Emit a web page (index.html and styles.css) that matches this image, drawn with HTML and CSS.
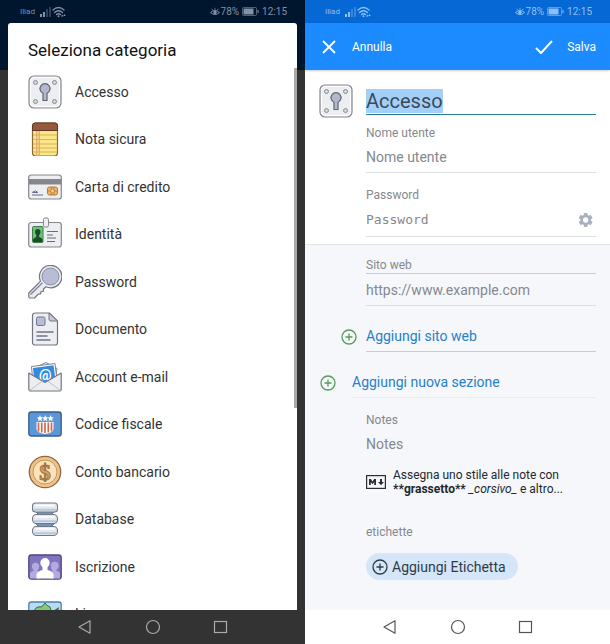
FILE: index.html
```html
<!DOCTYPE html>
<html lang="it">
<head>
    <meta charset="UTF-8">
    <meta name="viewport" content="width=device-width, initial-scale=1.0">
    <title>Seleziona categoria</title>
    <link rel="stylesheet" href="styles.css">
</head>
<body>
    <!-- shared icons -->
    <svg class="sprite" aria-hidden="true">
        <symbol id="signal" viewBox="0 0 30 12">
            <g fill="currentColor">
                <path d="M0 8h2v3H0zM3 6h2v5H3z"/>
                <path d="M6 3h2v8H6zM9 1h2v10H9z" opacity=".35"/>
            </g>
            <g fill="none" stroke="currentColor" stroke-width="1.3" stroke-linecap="round">
                <path d="M13 4q5.500-5 11 0M14.500 6.500q4-3.500 8 0M16.500 8.500q2-1.500 4 0"/>
            </g>
            <circle cx="18.500" cy="10.300" r="1" fill="currentColor"/>
            <path d="M21 10.500l1.300-2 1.200 2zM24.500 8l-1.200 2h2.400z" fill="currentColor"/>
        </symbol>
        <symbol id="eye" viewBox="0 0 10 10">
            <g fill="none" stroke="currentColor">
                <path d="M.5 5.500Q5 1.500 9.500 5.500 5 9.500 .5 5.500z"/>
                <path d="M5 .8v2M1.800 1.800l1 1.500M8.200 1.800l-1 1.500" stroke-width=".8"/>
            </g>
            <circle cx="5" cy="5.500" r="1.700" fill="currentColor"/>
        </symbol>
        <symbol id="battery" viewBox="0 0 17 9">
            <rect x=".5" y=".5" width="14" height="8" rx="1" fill="none" stroke="currentColor" opacity=".6"/>
            <path d="M1.500 1.500h10v6h-10zM15.500 3h1v3h-1z" fill="currentColor"/>
        </symbol>
        <symbol id="safe" viewBox="0 0 34 34">
            <rect x="1" y="1" width="32" height="32" rx="5" fill="#eceef2" stroke="#85878c" stroke-width="1.200"/>
            <rect x="2.500" y="2.500" width="29" height="29" rx="4" fill="none" stroke="#fff" stroke-width="1"/>
            <g fill="#d4d7de" stroke="#8b8d94">
                <circle cx="7.500" cy="7.500" r="2"/><circle cx="26.500" cy="7.500" r="2"/>
                <circle cx="7.500" cy="26.500" r="2"/><circle cx="26.500" cy="26.500" r="2"/>
            </g>
            <path d="M15 18.200a5 5 0 1 1 4 0V25.500h-4z" fill="#b3b9cc" stroke="#62656f" stroke-width="1.200"/>
        </symbol>
        <symbol id="plus" viewBox="0 0 16 16">
            <circle cx="8" cy="8" r="7" fill="none" stroke="currentColor" stroke-width="1.300"/>
            <path d="M8 4.500v7M4.500 8h7" stroke="currentColor" stroke-width="1.300"/>
        </symbol>
        <symbol id="back" viewBox="0 0 16 16">
            <path d="M13 1.800v12.400L2 8z" fill="none" stroke="currentColor" stroke-width="1.200" stroke-linejoin="round"/>
        </symbol>
        <symbol id="home" viewBox="0 0 16 16">
            <circle cx="8" cy="8" r="6.500" fill="none" stroke="currentColor" stroke-width="1.200"/>
        </symbol>
        <symbol id="recent" viewBox="0 0 16 16">
            <rect x="1.500" y="2.500" width="12" height="11" fill="none" stroke="currentColor" stroke-width="1.200"/>
        </symbol>
    </svg>

    <main class="screens">
        <section class="phone phone-dark">
            <header class="status">
                <span class="carrier">Iliad</span>
                <svg class="signal"><use href="#signal"/></svg>
                <svg class="eye"><use href="#eye"/></svg>
                <span>78%</span>
                <svg class="battery"><use href="#battery"/></svg>
                <span>12:15</span>
            </header>

            <div class="dialog" role="dialog" aria-labelledby="dialog-title">
                <h1 class="dialog-title" id="dialog-title">Seleziona categoria</h1>
                <div class="categories">
                    <button class="category">
                        <svg viewBox="0 0 34 34"><use href="#safe"/></svg>
                        Accesso
                    </button>
                    <button class="category">
                        <svg viewBox="0 0 34 34">
                            <rect x="4.500" y="1" width="25" height="33" rx="3" fill="#fbe68c" stroke="#8a6a35" stroke-width="1.200"/>
                            <path d="M8.500 8h3v25h-3z" fill="#f8c989"/>
                            <path d="M5 13h24M5 17.500h24M5 22h24M5 26h24M5 30h24" stroke="#d3b354"/>
                            <path d="M8.500 8v25M11.500 8v25" stroke="#e2a565" stroke-width=".8"/>
                            <path d="M4.500 8.500V3.500a2.500 2.500 0 0 1 2.500-2.500h20a2.500 2.500 0 0 1 2.500 2.500v5z" fill="#96593a" stroke="#5f3823"/>
                        </svg>
                        Nota sicura
                    </button>
                    <button class="category">
                        <svg viewBox="0 0 34 34">
                            <rect x=".7" y="5" width="32.600" height="24" rx="2.500" fill="#eceef2" stroke="#85878c" stroke-width="1.200"/>
                            <path d="M1 9h32v5.500H1z" fill="#85888b"/>
                            <rect x="19.500" y="17" width="10" height="8" rx="2" fill="#f3b466" stroke="#b77c3b"/>
                            <path d="M20 21h3M26 21h3M23 17v2M26 17v2M23 25v-2M26 25v-2" stroke="#b77c3b" stroke-width=".8"/>
                            <circle cx="24.500" cy="21" r="2" fill="#f8cb8e" stroke="#b77c3b" stroke-width=".8"/>
                            <path d="M4 22.500q4-3 6 0M5 22.500h5M4 25h11" fill="none" stroke="#666d85"/>
                        </svg>
                        Carta di credito
                    </button>
                    <button class="category">
                        <svg viewBox="0 0 34 34">
                            <rect x=".7" y="5.500" width="32.600" height="24.500" rx="2.500" fill="#eceef2" stroke="#85878c" stroke-width="1.200"/>
                            <rect x="4.500" y="9.500" width="10.500" height="16" rx="1" fill="#73c278" stroke="#407d46"/>
                            <path d="M5 25v-2.500q1-2 3.300-2.500v-2q-1.300-1-1.300-3a2.700 3 0 0 1 5.500 0q0 2-1.300 3v2q2.800.5 3.300 2.500V25z" fill="#174f2b"/>
                            <path d="M19 14.500h11M19 18h6M19 21h9M19 24.500h8" stroke="#686b78" stroke-width="1.200"/>
                            <rect x="15.500" y="1" width="5" height="9" rx="1.500" fill="#eef0f3" stroke="#85878c"/>
                        </svg>
                        Identità
                    </button>
                    <button class="category">
                        <svg viewBox="0 0 34 34">
                            <path d="M.8 28L12.500 16.200a11.200 11.200 0 1 1 5.500 5.500l-2.500 2.300-.3 2.300-2.200.2-.4 2.300-2.400.3-3.700 3.900H2q-1.200 0-1.200-1.200z" fill="#e9ebf0" stroke="#73767e" stroke-width="1.200" stroke-linejoin="round"/>
                            <circle cx="22.500" cy="11.500" r="8.500" fill="#b7bdd4" stroke="#868ca4"/>
                            <path d="M2.500 29.500L14.500 17.800" stroke="#858a9f" stroke-width="1.500"/>
                        </svg>
                        Password
                    </button>
                    <button class="category">
                        <svg viewBox="0 0 34 34">
                            <path d="M7 1h14.500l8 8v21.500a2.500 2.500 0 0 1-2.500 2.500H7a2.500 2.500 0 0 1-2.500-2.500v-27A2.500 2.500 0 0 1 7 1z" fill="#eceef2" stroke="#73767e" stroke-width="1.200"/>
                            <path d="M21 1v6q0 2 2 2h6.500z" fill="#c8cad0" stroke="#73767e"/>
                            <rect x="8.500" y="5" width="8.500" height="8.500" rx="1.500" fill="#b7bdd4" stroke="#70778e"/>
                            <path d="M8.500 20h17M8.500 24h11M8.500 28h14" stroke="#6e7588" stroke-width="1.300"/>
                        </svg>
                        Documento
                    </button>
                    <button class="category">
                        <svg viewBox="0 0 34 34">
                            <path d="M6 8l12-5.500 11 6-2 15H8z" fill="#f4f5f8" stroke="#82858c"/>
                            <path d="M3.500 6.500L27 3.500l2 17-24 3z" fill="#fff" stroke="#82858c"/>
                            <path d="M5 8l20.500-2.800L27.500 20l-21 4z" fill="#328be1"/>
                            <text x="11" y="20" class="at">@</text>
                            <path d="M.8 13L17 22.500 33.200 13v16q0 2-2 2H2.800q-2 0-2-2z" fill="#eceef2" stroke="#73767e" stroke-width="1.200" stroke-linejoin="round"/>
                            <path d="M1.500 30.500L14.500 21M32.500 30.500L19.500 21" stroke="#bfc1c8"/>
                        </svg>
                        Account e-mail
                    </button>
                    <button class="category">
                        <svg viewBox="0 0 34 34">
                            <rect x=".8" y="5" width="32.400" height="24" rx="2.500" fill="#5b96d7" stroke="#385c85" stroke-width="1.300"/>
                            <path d="M8.500 15h17v7q0 4-8.500 5-8.500-1-8.500-5z" fill="#fff"/>
                            <path d="M10.500 15.500v9M13.700 15.500v10M17 15.500v10.500M20.300 15.500v10M23.500 15.500v9" stroke="#cf6a50" stroke-width="1.700"/>
                            <path d="M12 8l.9 2.300 2.300.1-1.800 1.500.7 2.300-2.100-1.300-2.100 1.300.7-2.300-1.800-1.500 2.300-.1zM17.300 8l.9 2.300 2.300.1-1.800 1.500.7 2.300-2.100-1.300-2.100 1.300.7-2.300-1.800-1.500 2.300-.1zM22.600 8l.9 2.300 2.300.1-1.800 1.500.7 2.300-2.100-1.300-2.100 1.300.7-2.300-1.800-1.500 2.300-.1z" fill="#fff"/>
                        </svg>
                        Codice fiscale
                    </button>
                    <button class="category">
                        <svg viewBox="0 0 34 34">
                            <circle cx="17" cy="17" r="15.700" fill="#f0c28b" stroke="#8c6741" stroke-width="1.300"/>
                            <circle cx="17" cy="17" r="12" fill="#fae3bc" stroke="#cc9258"/>
                            <text x="17" y="25" class="dollar">$</text>
                        </svg>
                        Conto bancario
                    </button>
                    <button class="category">
                        <svg viewBox="0 0 34 34">
                            <path d="M7.500 9h19l-2 2.500 2 3h-19l2-3zM7.500 21h19l-2 2.500 2 3h-19l2-3z" fill="#6f96c2" stroke="#4b6785"/>
                            <g fill="#e4e9ef" stroke="#717984" stroke-width="1.100">
                                <rect x="4.500" y="1" width="25" height="9" rx="3"/>
                                <rect x="4.500" y="12.500" width="25" height="9" rx="4"/>
                                <rect x="4.500" y="24.500" width="25" height="9" rx="4"/>
                            </g>
                            <path d="M6 7.700h22M6 19.200h22M6 31.200h22" stroke="#b9c9da" stroke-width="2"/>
                            <path d="M7.500 3.500h19M7.500 15h19M7.500 27h19" stroke="#fff" stroke-width="1.500"/>
                        </svg>
                        Database
                    </button>
                    <button class="category">
                        <svg viewBox="0 0 34 34">
                            <rect x=".8" y="5" width="32.400" height="24" rx="2.500" fill="#8073bf" stroke="#504680" stroke-width="1.300"/>
                            <g fill="#b4aae0">
                                <path d="M2 28.500V23q1-2 4-2.500-2.500-2-2.200-4.500a3.800 4 0 0 1 7.500 0q0 3-2 4.500l3 2v6z"/>
                                <path d="M32 28.500V23q-1-2-4-2.500 3-2 2.700-4.500a4 4.200 0 0 0-8 0q0 3 2 4.500l-3 2v6z"/>
                            </g>
                            <path d="M8.500 28.500v-4q.5-3 6-4.500v-2.500Q12.300 15.500 12.300 13a4.700 5 0 0 1 9.400 0q0 2.500-2.200 4.500V20q5.500 1.500 6 4.500v4z" fill="#fff"/>
                        </svg>
                        Iscrizione
                    </button>
                    <button class="category">
                        <svg viewBox="0 0 34 34">
                            <rect x=".8" y="5" width="32.400" height="24" rx="2.500" fill="#b7dbf3" stroke="#4d80ae" stroke-width="1.300"/>
                            <path d="M6 14q2-5 7-4 2-1 4-4 2 3 5 4 2 5-1 7H7z" fill="#86c779" stroke="#26723d"/>
                            <path d="M25 14l6-4-1 6-5 3z" fill="#2c7545"/>
                        </svg>
                        Licenza
                    </button>
                </div>
                <div class="scrollbar"></div>
            </div>

            <nav class="navbar">
                <button aria-label="Indietro"><svg><use href="#back"/></svg></button>
                <button aria-label="Home"><svg><use href="#home"/></svg></button>
                <button aria-label="Recenti"><svg><use href="#recent"/></svg></button>
            </nav>
        </section>

        <section class="phone phone-light">
            <header class="status">
                <span class="carrier">Iliad</span>
                <svg class="signal"><use href="#signal"/></svg>
                <svg class="eye"><use href="#eye"/></svg>
                <span>78%</span>
                <svg class="battery"><use href="#battery"/></svg>
                <span>12:15</span>
            </header>
            <div class="toolbar">
                <button class="cancel">
                    <svg viewBox="0 0 14 14"><path d="M1 1l12 12M13 1L1 13" stroke="#fff" stroke-width="1.800"/></svg>
                    Annulla
                </button>
                <button class="save">
                    <svg viewBox="0 0 18 14"><path d="M1 8l5 5L17 1" fill="none" stroke="#fff" stroke-width="2"/></svg>
                    Salva
                </button>
            </div>

            <form class="form">
                <div class="top">
                    <div class="title-row">
                        <svg><use href="#safe"/></svg>
                        <input class="title-input" id="title" type="text" value="Accesso" aria-label="Titolo">
                    </div>
                    <div class="field">
                        <label for="user">Nome utente</label>
                        <input id="user" type="text" placeholder="Nome utente">
                    </div>
                    <div class="field field-password">
                        <label for="pass">Password</label>
                        <div class="password-row">
                            <input id="pass" class="mono" type="text" placeholder="Password">
                            <button type="button" class="gear" aria-label="Genera password">
                                <svg viewBox="0 0 24 24"><path fill="#a9b0c0" fill-rule="evenodd" d="M19.400 13a7.800 7.800 0 0 0 0-2l2.200-1.700c.2-.1.200-.4.100-.6l-2.300-4c-.1-.2-.4-.3-.6-.2l-2.700 1a8 8 0 0 0-1.700-1L14 1.800a.5.5 0 0 0-.5-.4h-4a.5.5 0 0 0-.5.4l-.4 2.700a8 8 0 0 0-1.700 1l-2.700-1c-.2-.1-.5 0-.6.200l-2.300 4c-.1.200-.1.500.1.600L3.600 11a7.800 7.800 0 0 0 0 2l-2.200 1.700c-.2.100-.2.400-.1.600l2.300 4c.1.200.4.300.6.200l2.700-1a8 8 0 0 0 1.700 1l.4 2.700c0 .2.200.4.500.4h4c.2 0 .5-.2.500-.4l.4-2.700a8 8 0 0 0 1.700-1l2.700 1c.2.100.5 0 .6-.2l2.300-4c.1-.2.100-.5-.1-.6zM11.500 16a4 4 0 1 1 0-8 4 4 0 0 1 0 8z"/></svg>
                            </button>
                        </div>
                    </div>
                </div>

                <div class="rest">
                    <div class="field field-site">
                        <label for="site">Sito web</label>
                        <input id="site" type="url" placeholder="https://www.example.com">
                    </div>
                    <button type="button" class="add add-site">
                        <svg><use href="#plus"/></svg>
                        <span>Aggiungi sito web</span>
                    </button>
                    <button type="button" class="add add-section">
                        <svg><use href="#plus"/></svg>
                        <span>Aggiungi nuova sezione</span>
                    </button>
                    <div class="field field-notes">
                        <label for="notes">Notes</label>
                        <input id="notes" type="text" placeholder="Notes">
                    </div>
                    <div class="hint">
                        <svg viewBox="0 0 20 14">
                            <rect x=".6" y=".6" width="18.800" height="12.800" fill="none" stroke="#2b2e33" stroke-width="1.200"/>
                            <path d="M3 10V4h1.800l1.700 2.500L8.200 4H10v6H8.200V7L6.500 9.300 4.800 7v3zM14 4h2v3h2l-3 3.300L12 7h2z" fill="#2b2e33"/>
                        </svg>
                        <p>Assegna uno stile alle note con <b>**grassetto**</b> <i>_corsivo_</i> e altro...</p>
                    </div>
                    <p class="tags-label">etichette</p>
                    <button type="button" class="chip">
                        <svg><use href="#plus"/></svg>
                        Aggiungi Etichetta
                    </button>
                </div>
            </form>

            <nav class="navbar">
                <button aria-label="Indietro"><svg><use href="#back"/></svg></button>
                <button aria-label="Home"><svg><use href="#home"/></svg></button>
                <button aria-label="Recenti"><svg><use href="#recent"/></svg></button>
            </nav>
        </section>
    </main>

    <script>
        // the title is ready to be overwritten
        const title = document.getElementById("title");
        title.focus();
        title.select();
    </script>
</body>
</html>
```
FILE: styles.css
```css
* {
    margin: 0;
    padding: 0;
    box-sizing: border-box;
}

body {
    font-family: Roboto, "Liberation Sans", sans-serif;
    font-size: 14px;
    color: #333;
}

button,
input {
    font: inherit;
    color: inherit;
    background: none;
    border: none;
    outline: none;
}

button {
    cursor: pointer;
}

svg {
    display: block;
    flex-shrink: 0;
}

.sprite {
    position: absolute;
    width: 0;
    height: 0;
}

.screens {
    display: flex;
    height: 100vh;
}

.phone {
    flex: 1;
    min-width: 0;
    display: flex;
    flex-direction: column;
}

.phone-dark {
    background: linear-gradient(#00152e 70px, #333 70px);
}

.phone-light {
    background-color: #fff;
}

/* status bar */
.status {
    display: flex;
    align-items: center;
    height: 23px;
    padding: 0 18px 0 20px;
    font-size: 10px;
    color: #8291a6;
}

.phone-light .status {
    background-color: #0568d4;
    color: #8fc0f4;
}

.carrier {
    font-size: 8px;
}

.signal {
    width: 30px;
    height: 12px;
    margin-left: 5px;
    margin-right: auto;
}

.eye {
    width: 10px;
    height: 10px;
    margin-right: 1px;
}

.battery {
    width: 17px;
    height: 9px;
    margin: 0 3px;
}

/* category dialog */
.dialog {
    position: relative;
    flex: 1;
    min-height: 0;
    display: flex;
    flex-direction: column;
    margin: 0 8px;
    background-color: #fff;
    border-radius: 3px 3px 0 0;
    overflow: hidden;
}

.dialog-title {
    height: 45px;
    padding: 16px 20px 0;
    font-size: 17px;
    line-height: 22px;
    font-weight: 400;
    color: #111;
}

.categories {
    flex: 1;
    min-height: 0;
    display: grid;
    grid-template-rows: repeat(6, 47px 48px);
    overflow: hidden;
}

.category {
    display: flex;
    align-items: center;
    gap: 13px;
    padding: 0 20px;
    text-align: left;
}

.category svg {
    width: 34px;
    height: 34px;
}

.at {
    font: bold 14px Roboto, sans-serif;
    fill: #fff;
}

.dollar {
    font: bold 23px "Liberation Serif", serif;
    text-anchor: middle;
    fill: #dba259;
    stroke: #9f7443;
    stroke-width: 1px;
}

.scrollbar {
    position: absolute;
    top: 45px;
    right: 0;
    width: 3px;
    height: 340px;
    background-color: #a9a9a9;
}

/* system navigation */
.navbar {
    display: flex;
    justify-content: center;
    align-items: center;
    gap: 52px;
    height: 34px;
    color: #555;
}

.phone-dark .navbar {
    color: #aaa;
}

.navbar svg {
    width: 16px;
    height: 16px;
}

/* toolbar */
.toolbar {
    display: flex;
    justify-content: space-between;
    align-items: center;
    height: 47px;
    padding: 0 14px 0 17px;
    background-color: #1b8bff;
    box-shadow: 0 1px 2px rgba(0, 0, 0, 0.2);
    color: #fff;
    font-size: 12px;
}

.toolbar button {
    display: flex;
    align-items: center;
    gap: 16px;
}

.cancel svg {
    width: 14px;
    height: 14px;
}

.toolbar .save {
    gap: 14px;
}

.save svg {
    width: 18px;
    height: 14px;
}

/* form */
.form {
    flex: 1;
    min-height: 0;
    display: flex;
    flex-direction: column;
}

.top {
    padding: 14px 14px 7px;
    border-bottom: 1px solid #e0e2e5;
}

.title-row {
    display: flex;
    align-items: center;
    gap: 13px;
    height: 34px;
}

.title-row svg {
    width: 34px;
    height: 34px;
}

.title-input {
    flex: 1;
    min-width: 0;
    height: 28px;
    border-bottom: 1px solid #278094;
    font-size: 20px;
    color: #3c4a5a;
}

.title-input::selection {
    background-color: #a3d0f9;
    color: #3c4a5a;
}

.field {
    margin-left: 47px;
    border-bottom: 1px solid #dcdee2;
    color: #85888f;
}

.field label {
    display: block;
    padding-top: 7px;
    font-size: 12px;
    line-height: 16px;
}

.field input {
    display: block;
    width: 100%;
    height: 31px;
}

.field input::placeholder {
    color: #85888f;
}

.field-password {
    padding-top: 7px;
}

.password-row {
    display: flex;
    align-items: center;
    height: 33px;
}

.field .mono {
    flex: 1;
    min-width: 0;
    font-family: "DejaVu Sans Mono", monospace;
    font-size: 13px;
}

.gear {
    padding: 0 2px;
}

.gear svg {
    width: 16px;
    height: 16px;
}

.rest {
    flex: 1;
    padding: 6px 14px 0;
    background-color: #f5f7fb;
}

.field-site label {
    border-bottom: 1px solid #c9ccd1;
    line-height: 15px;
}

.add {
    display: flex;
    align-items: center;
    width: 100%;
    height: 46px;
    color: #277fc9;
    text-align: left;
}

.add svg {
    width: 16px;
    height: 16px;
    color: #559b5b;
}

.add span {
    flex: 1;
    line-height: 30px;
    border-bottom: 1px solid #c9ccd1;
}

.add-site {
    gap: 9px;
    padding: 15px 0 0 22px;
}

.add-section {
    gap: 16px;
    padding: 15px 0 0 1px;
}

.add-section span {
    border-color: #e9ebef;
}

.field-notes {
    padding-top: 7px;
    border-bottom: none;
}

.hint {
    display: flex;
    align-items: center;
    gap: 7px;
    margin: 9px 30px 0 47px;
    font-size: 12px;
    line-height: 14px;
    color: #24272c;
}

.hint svg {
    width: 20px;
    height: 14px;
}

.tags-label {
    margin: 28px 0 13px 47px;
    font-size: 12px;
    line-height: 16px;
    color: #85888f;
}

.chip {
    display: flex;
    align-items: center;
    gap: 4px;
    height: 27px;
    margin-left: 47px;
    padding: 0 12px 0 6px;
    border-radius: 14px;
    background-color: #d5e6f8;
    color: #2f3b49;
}

.chip svg {
    width: 16px;
    height: 16px;
}
```
